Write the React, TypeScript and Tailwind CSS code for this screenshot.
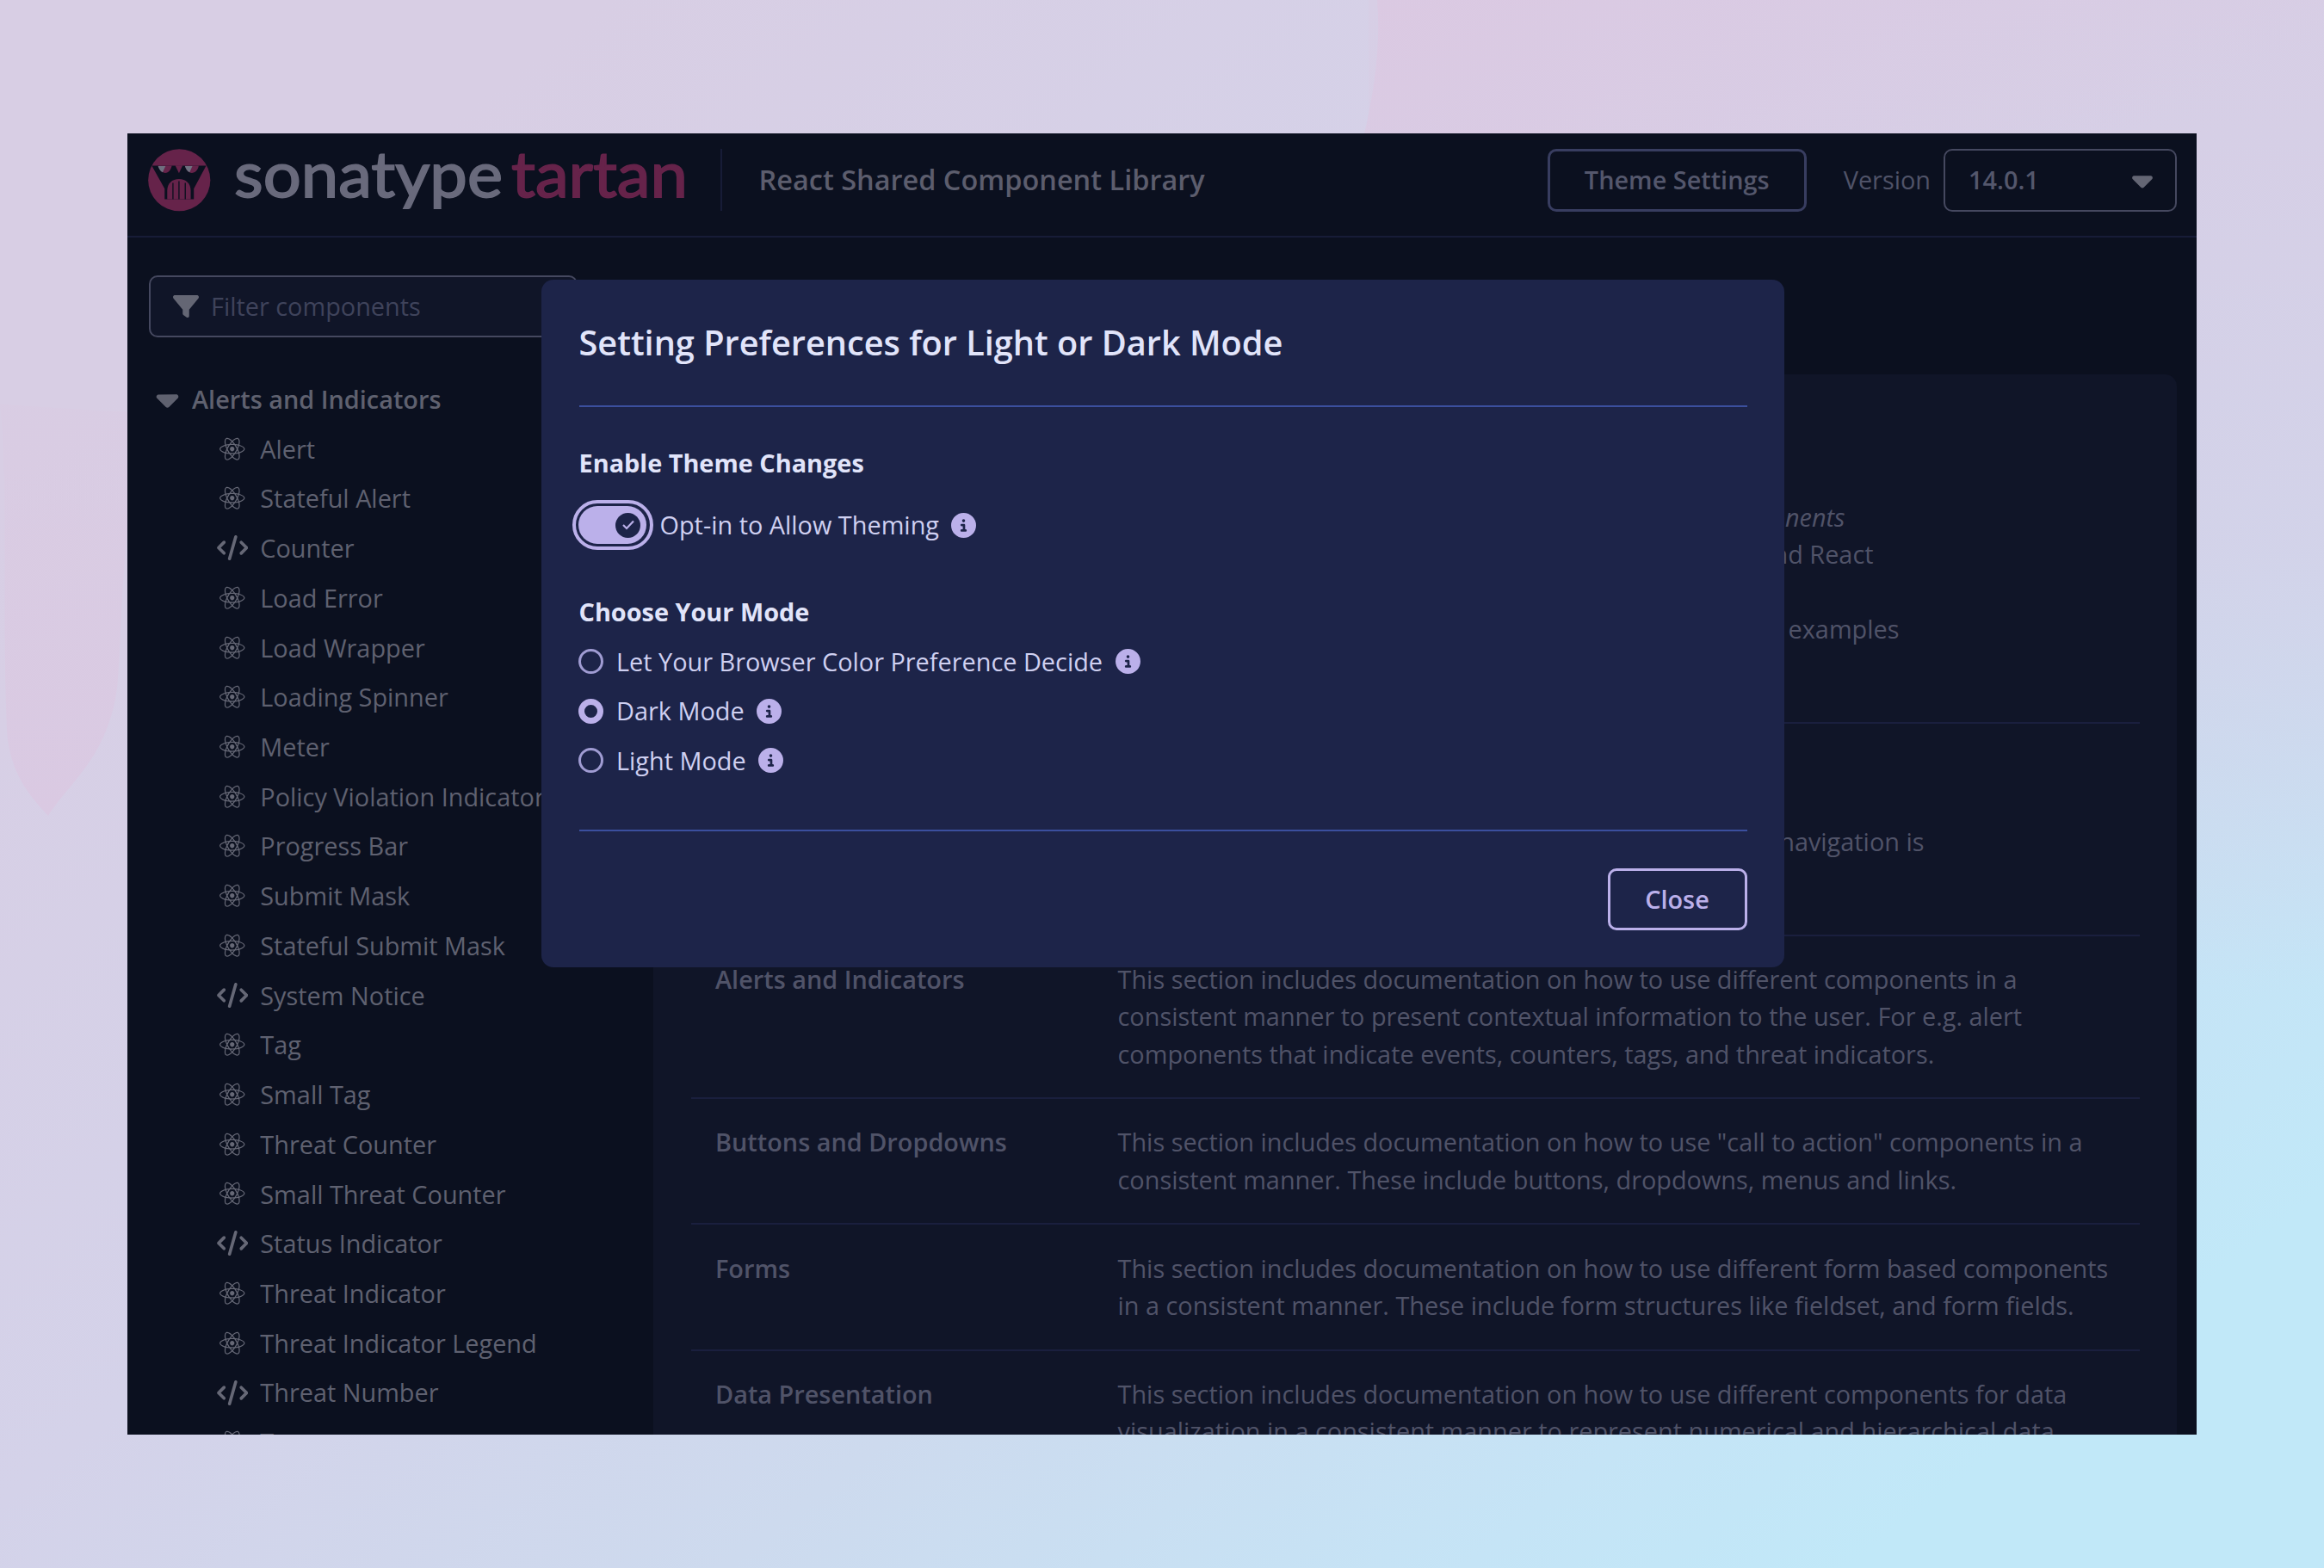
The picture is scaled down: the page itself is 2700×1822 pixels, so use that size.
import React, { useState } from 'react';
import { FaCaretDown, FaCircleInfo, FaCode, FaFilter, FaReact } from 'react-icons/fa6';

interface NavItem {
  name: string;
  icon: 'react' | 'code';
}

const navItems: NavItem[] = [
  { name: 'Alert', icon: 'react' },
  { name: 'Stateful Alert', icon: 'react' },
  { name: 'Counter', icon: 'code' },
  { name: 'Load Error', icon: 'react' },
  { name: 'Load Wrapper', icon: 'react' },
  { name: 'Loading Spinner', icon: 'react' },
  { name: 'Meter', icon: 'react' },
  { name: 'Policy Violation Indicator', icon: 'react' },
  { name: 'Progress Bar', icon: 'react' },
  { name: 'Submit Mask', icon: 'react' },
  { name: 'Stateful Submit Mask', icon: 'react' },
  { name: 'System Notice', icon: 'code' },
  { name: 'Tag', icon: 'react' },
  { name: 'Small Tag', icon: 'react' },
  { name: 'Threat Counter', icon: 'react' },
  { name: 'Small Threat Counter', icon: 'react' },
  { name: 'Status Indicator', icon: 'code' },
  { name: 'Threat Indicator', icon: 'react' },
  { name: 'Threat Indicator Legend', icon: 'react' },
  { name: 'Threat Number', icon: 'code' },
  { name: 'Toast', icon: 'react' },
];

const sections = [
  {
    title: 'Alerts and Indicators',
    lines: [
      'This section includes documentation on how to use different components in a',
      'consistent manner to present contextual information to the user. For e.g. alert',
      'components that indicate events, counters, tags, and threat indicators.',
    ],
  },
  {
    title: 'Buttons and Dropdowns',
    lines: [
      'This section includes documentation on how to use "call to action" components in a',
      'consistent manner. These include buttons, dropdowns, menus and links.',
    ],
  },
  {
    title: 'Forms',
    lines: [
      'This section includes documentation on how to use different form based components',
      'in a consistent manner. These include form structures like fieldset, and form fields.',
    ],
  },
  {
    title: 'Data Presentation',
    lines: [
      'This section includes documentation on how to use different components for data',
      'visualization in a consistent manner to represent numerical and hierarchical data.',
    ],
  },
];

const modes = ['Let Your Browser Color Preference Decide', 'Dark Mode', 'Light Mode'];

const Backdrop = () => (
  <svg className="absolute inset-0" width="2700" height="1822" viewBox="0 0 2700 1822" aria-hidden="true">
    <defs>
      <linearGradient id="sky" gradientUnits="userSpaceOnUse" x1="700" y1="0" x2="2150" y2="1822">
        <stop offset="0" stopColor="#d8cee4" />
        <stop offset="0.4" stopColor="#d4d2e9" />
        <stop offset="0.65" stopColor="#cddaee" />
        <stop offset="0.88" stopColor="#c5e4f6" />
        <stop offset="1" stopColor="#c1e8f8" />
      </linearGradient>
      <linearGradient id="drip" x1="0" y1="0" x2="0" y2="1">
        <stop offset="0" stopColor="#dbc9e1" stopOpacity="0.3" />
        <stop offset="1" stopColor="#dac9e2" />
      </linearGradient>
      <linearGradient id="dusk" x1="0" y1="0" x2="0" y2="1">
        <stop offset="0" stopColor="#d7cee5" />
        <stop offset="0.55" stopColor="#d4d1e8" stopOpacity="0.85" />
        <stop offset="1" stopColor="#d4d1e8" stopOpacity="0" />
      </linearGradient>
      <linearGradient id="corner" x1="0" y1="0" x2="1" y2="0.3">
        <stop offset="0" stopColor="#dbc9e2" />
        <stop offset="0.4" stopColor="#dacae3" stopOpacity="0.8" />
        <stop offset="1" stopColor="#dacae3" stopOpacity="0" />
      </linearGradient>
    </defs>
    <rect width="2700" height="1822" fill="url(#sky)" />
    <rect x="1590" width="1110" height="1150" fill="url(#dusk)" />
    <path d="M0 470C10 560 2 700 8 850C12 900 35 925 56 948C80 910 125 880 136 800C142 740 140 600 170 480Z" fill="url(#drip)" />
    <path d="M1600 0C1604 50 1598 100 1584 160H2700V0Z" fill="url(#corner)" />
  </svg>
);

const Logo = () => (
  <div className="flex">
    <svg width="72.5" height="72.5" viewBox="38 39 218 218" aria-hidden="true">
      <circle cx="147" cy="148" r="108.5" fill="#66234a" />
      <path d="M51 98H241L198 178V215H96V178Z" fill="#0b101f" />
      <path d="M133 97L146 124L159 97Z" fill="#66234a" />
      <path d="M74 98C78 115 88 123 98 123C110 123 118 112 121 98Z" fill="#66234a" />
      <path d="M167 98C170 112 180 123 191 123C202 123 212 115 215 98Z" fill="#66234a" />
      <path d="M73 99H99L89 121C80 117 76 108 73 99Z" fill="#6f7080" />
      <path d="M167 99H193L183 121C174 117 170 108 167 99Z" fill="#6f7080" />
      <path d="M105 215V184C105 160 122 144 146 144C170 144 187 160 187 184V215Z" fill="#66234a" />
      <path d="M125 158V215M146 152V215M168 158V215" stroke="#0b101f" strokeWidth="4" />
    </svg>
    <svg className="ml-7 overflow-visible" width="522" height="72.5" viewBox="0 0 522 72.5" fontFamily="Lato, sans-serif" fontSize="73">
      <text x="-1" y="55.5" textLength="312" lengthAdjust="spacingAndGlyphs" fill="#696a7c" stroke="#696a7c" strokeWidth="1.8">
        sonatype
      </text>
      <text x="321" y="55.5" textLength="205" lengthAdjust="spacingAndGlyphs" fill="#66234a" stroke="#66234a" strokeWidth="1.8">
        tartan
      </text>
    </svg>
  </div>
);

const Header = () => (
  <header className="flex h-[121px] items-start border-b-2 border-[#171c37] pt-[18px] pr-[23px] pl-[24px]">
    <Logo />
    <div className="ml-[42px] h-[72px] w-[2px] bg-[#171c37]" />
    <h1 className="ml-[43px] text-[32.48px] leading-[71.5px] font-semibold whitespace-nowrap text-[#5c5d6d]">
      React Shared Component Library
    </h1>
    <div className="ml-auto flex items-center">
      <button className="h-[72.5px] w-[301px] rounded-[10px] border-[3.6px] border-[#383d60] pb-[2px] font-semibold text-[#54576c]">
        Theme Settings
      </button>
      <span className="ml-[43px] pb-[2px] text-[#505368]">Version</span>
      <div className="ml-[15px] flex h-[72.5px] w-[271px] items-center justify-between rounded-[10px] border-2 border-[#45485f] pr-[19px] pb-[1px] pl-[27px] font-semibold text-[#54576c]">
        14.0.1
        <FaCaretDown size={38} className="text-[#646674]" />
      </div>
    </div>
  </header>
);

const Sidebar = () => (
  <nav className="w-[611px] shrink-0 pt-[43.5px] pl-[24.5px]">
    <div className="flex h-[72px] w-[498px] items-center rounded-[10px] border-2 border-[#45485f] bg-[#101528] pl-[26px] text-[#3f435b]">
      <FaFilter size={30} className="mr-[14.5px] text-[#646674]" />
      Filter components
    </div>
    <div className="mt-[43.3px] flex h-[57.73px] items-center font-semibold text-[#5f616f]">
      <FaCaretDown size={41} className="mr-[8.5px] ml-[1px]" />
      Alerts and Indicators
    </div>
    {navItems.map((item) => (
      <div key={item.name} className="flex h-[57.73px] items-center whitespace-nowrap text-[#5f6170]">
        <span className="ml-[78.5px] flex w-[38px] justify-center text-[#666876]">
          {item.icon === 'react' ? <FaReact size={29.5} /> : <FaCode size={29} className="h-[29px] w-[36.5px]" />}
        </span>
        <span className="ml-[13.3px]">{item.name}</span>
      </div>
    ))}
  </nav>
);

const Content = () => (
  <main className="mt-[159px] mr-[23px] grow rounded-[14px] bg-[#101528] px-[43.5px] whitespace-nowrap text-[#505368]">
    <div className="h-[406px] border-b-2 border-[#1a1f3e] pt-[144px] text-right">
      <p className="pr-[342px] italic">components</p>
      <p className="pr-[309px]">and React</p>
      <p className="mt-[43.27px] pr-[279px]">examples</p>
    </div>
    <div className="h-[246.6px] border-b-2 border-[#1a1f3e] pt-[115px] text-right">
      <p className="pr-[250px]">navigation is</p>
    </div>
    {sections.map((section) => (
      <div key={section.title} className="flex border-b-2 border-[#1a1f3e] px-[28.5px] pt-[28.4px] pb-[29.3px]">
        <div className="w-[467.5px] shrink-0 font-semibold">{section.title}</div>
        <div>
          {section.lines.map((line) => (
            <p key={line}>{line}</p>
          ))}
        </div>
      </div>
    ))}
  </main>
);

const SettingsModal: React.FC = () => {
  const [enabled, setEnabled] = useState(true);
  const [mode, setMode] = useState('Dark Mode');

  return (
    <div
      role="dialog"
      className="absolute top-[170px] left-[481px] h-[799px] w-[1444px] rounded-[14px] bg-[#1d2449] px-[43.5px] text-[#cfd0f1]"
    >
      <h2 className="h-[148px] border-b-2 border-[#3b4f9e] pt-[44px] text-[39.7px] leading-[58px] font-semibold text-[#e1e4fa]">
        Setting Preferences for Light or Dark Mode
      </h2>

      <h3 className="mt-[42.5px] font-bold text-[#e1e4fa]">Enable Theme Changes</h3>
      <div className="mt-[22px] flex items-center">
        <button
          onClick={() => setEnabled(!enabled)}
          aria-label="Opt-in to Allow Theming"
          className="-ml-2 flex h-[58.5px] w-[94px] items-center justify-center rounded-full border-4 border-[#bbb0ea]"
        >
          <span
            className={`flex h-[43.5px] w-[79px] items-center rounded-full bg-[#bbb0ea] px-[7px] ${
              enabled ? 'justify-end' : 'justify-start'
            }`}
          >
            <span className="flex size-[29px] items-center justify-center rounded-full bg-[#1d2449]">
              <svg width="14" height="12" viewBox="0 0 14 12" fill="none" stroke="#bbb0ea" strokeWidth="2.2">
                <path d="M1 6L5 10L13 1.5" />
              </svg>
            </span>
          </span>
        </button>
        <span className="ml-[8px]">Opt-in to Allow Theming</span>
        <FaCircleInfo size={29} className="ml-[14px] text-[#bbb0ea]" />
      </div>

      <h3 className="mt-[49.5px] font-bold text-[#e1e4fa]">Choose Your Mode</h3>
      <div className="mt-[7.5px]">
        {modes.map((item) => (
          <div key={item} className="flex h-[57.7px] cursor-pointer items-center" onClick={() => setMode(item)}>
            <span
              className={`-ml-[0.5px] size-[29px] rounded-full ${
                item === mode ? 'border-[7.5px] border-[#bbb0ea]' : 'border-[3.6px] border-[#a09cd3]'
              }`}
            />
            <span className="ml-[15px]">{item}</span>
            <FaCircleInfo size={29} className="ml-[14.5px] text-[#bbb0ea]" />
          </div>
        ))}
      </div>

      <div className="mt-[51px] flex justify-end border-t-2 border-[#3b4f9e] pt-[43px]">
        <button className="h-[72.5px] w-[162px] rounded-[10px] border-[3.6px] border-[#bbb0ea] pb-[1px] font-semibold text-[#bbb0ea]">
          Close
        </button>
      </div>
    </div>
  );
};

const App = () => (
  <div className="relative h-[1822px] w-[2700px] overflow-hidden px-[148px] pt-[155px] font-['Open_Sans',sans-serif] text-[28.87px] leading-[43.27px]">
    <Backdrop />
    <div className="relative h-[1512px] w-[2404px] overflow-hidden bg-[#0b101f]">
      <Header />
      <div className="flex">
        <Sidebar />
        <Content />
      </div>
      <SettingsModal />
    </div>
  </div>
);

export default App;
